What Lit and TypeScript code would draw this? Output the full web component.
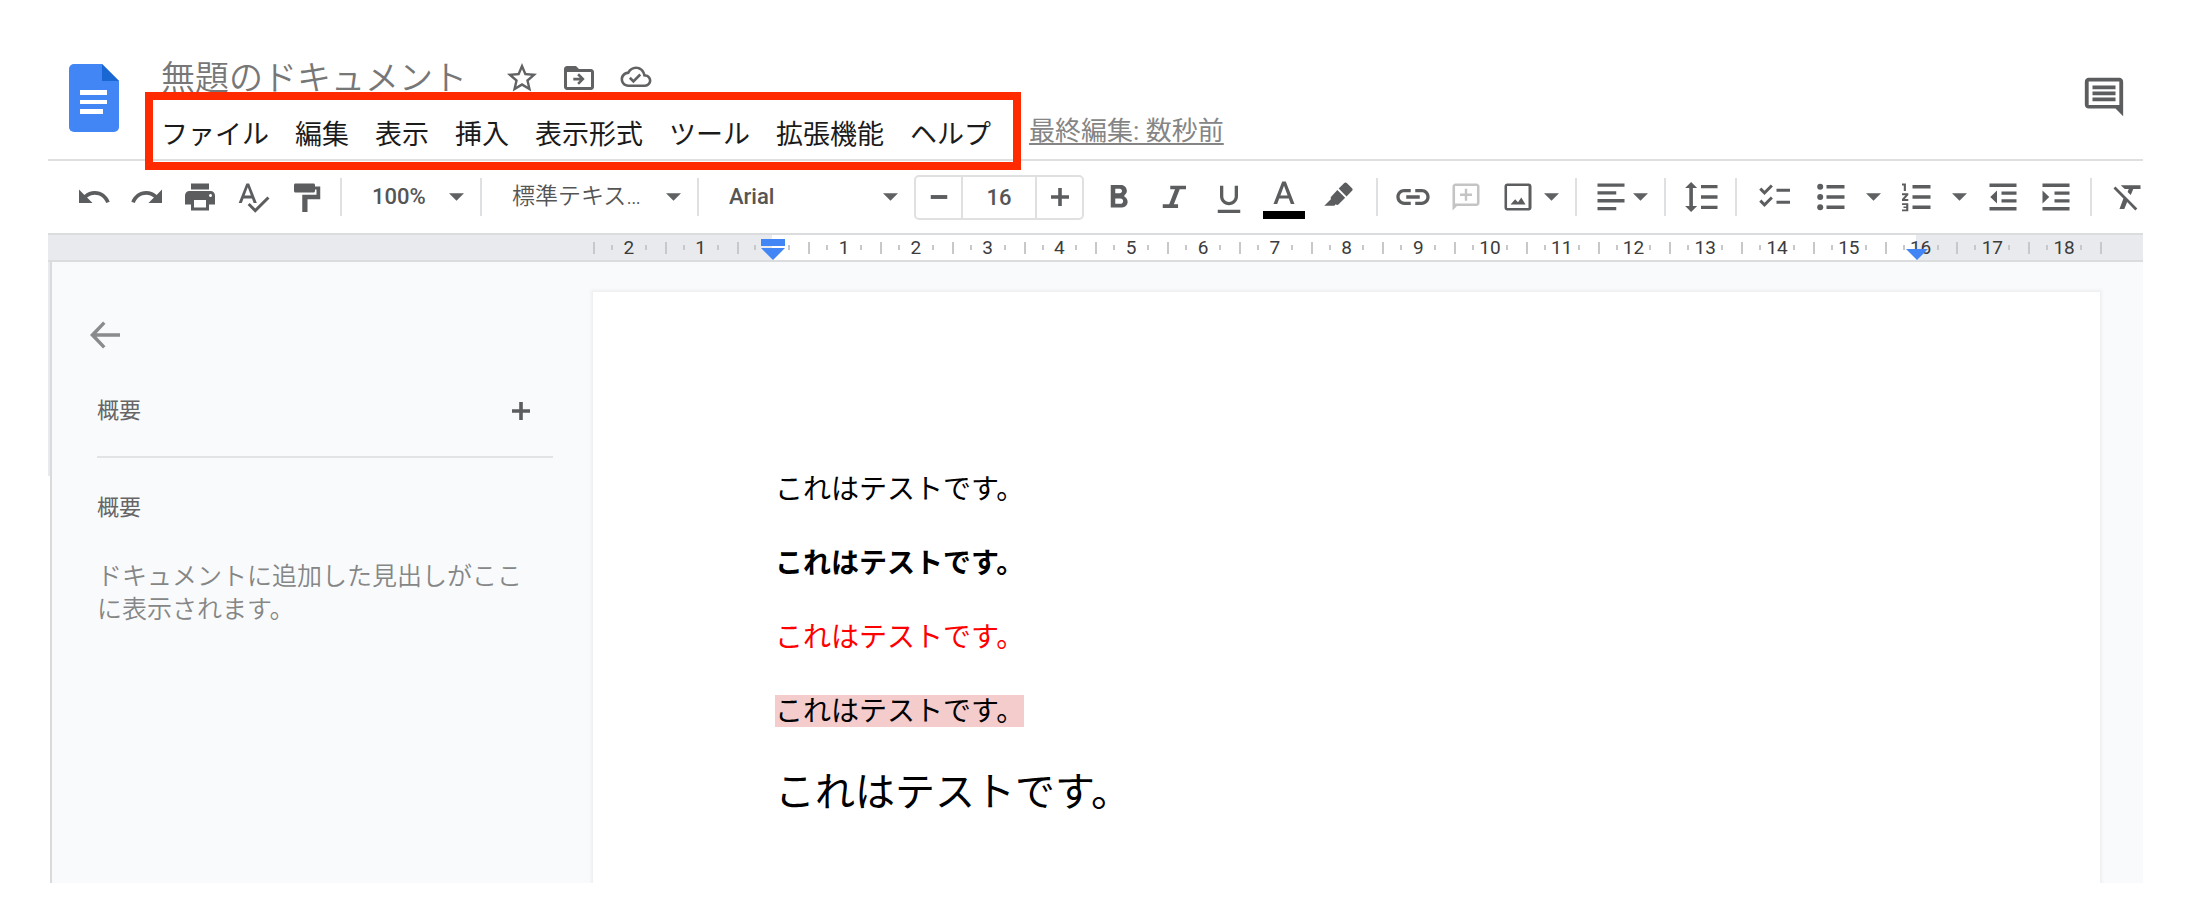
import { LitElement, html, css, svg } from "lit";
import { customElement, property } from "lit/decorators.js";

const star = svg`<path d="M22 9.24l-7.19-.62L12 2 9.19 8.63 2 9.24l5.46 4.73L5.82 21 12 17.27 18.18 21l-1.63-7.03L22 9.24zM12 15.4l-3.76 2.27 1-4.28-3.32-2.88 4.38-.38L12 6.1l1.71 4.04 4.38.38-3.32 2.88 1 4.28L12 15.4z"/>`;
const move = svg`<path d="M20 6h-8l-2-2H4c-1.1 0-2 .9-2 2v12c0 1.1.9 2 2 2h16c1.1 0 2-.9 2-2V8c0-1.100-.9-2-2-2zm0 12H4V8h16v10z"/><path d="M12 16.500l3.800-3.800-3.800-3.800-1.200 1.200 1.700 1.700H8.200v1.800h4.300l-1.700 1.700z"/>`;
const cloud = svg`<path d="M19.350 10.040C18.670 6.590 15.640 4 12 4 9.110 4 6.600 5.640 5.350 8.040 2.340 8.360 0 10.910 0 14c0 3.310 2.690 6 6 6h13c2.760 0 5-2.240 5-5 0-2.640-2.050-4.780-4.650-4.960zM19 18H6c-2.210 0-4-1.790-4-4 0-2.050 1.530-3.760 3.560-3.970l1.070-.110.5-.950C8.080 7.140 9.940 6 12 6c2.620 0 4.880 1.860 5.390 4.430l.3 1.500 1.530.110c1.560.1 2.780 1.410 2.780 2.960 0 1.650-1.350 3-3 3zm-9-3.820l-2.090-2.090L6.500 13.500 10 17l6.010-6.010-1.410-1.410z"/>`;
const comment = svg`<path d="M21.990 4c0-1.100-.890-2-1.990-2H4c-1.100 0-2 .9-2 2v12c0 1.100.9 2 2 2h14l4 4-.010-18zM20 16.200H4V3.900h16v12.300zM6 12.200h12v2H6zM6 9.100h12v2H6zM6 6h12v2H6z"/>`;

const icons: Record<string, unknown> = {
  undo: svg`<path d="M12.500 8c-2.650 0-5.050.990-6.900 2.600L2 7v9h9l-3.620-3.620c1.390-1.160 3.160-1.880 5.120-1.880 3.540 0 6.550 2.310 7.600 5.500l2.370-.780C21.080 11.030 17.150 8 12.500 8z"/>`,
  redo: svg`<path d="M18.400 10.600C16.550 8.990 14.150 8 11.500 8c-4.650 0-8.580 3.030-9.960 7.220L3.900 16c1.050-3.190 4.050-5.500 7.600-5.500 1.950 0 3.730.720 5.120 1.880L13 16h9V7l-3.600 3.600z"/>`,
  print: svg`<path d="M19 8H5c-1.660 0-3 1.340-3 3v6h4v4h12v-4h4v-6c0-1.660-1.340-3-3-3zm-3 11H8v-5h8v5zm3-7c-.55 0-1-.450-1-1s.450-1 1-1 1 .450 1 1-.450 1-1 1zm-1-9H6v4h12V3z"/>`,
  spell: svg`<path d="M12.450 16h2.090L9.430 3H7.570L2.460 16h2.090l1.120-3h5.640l1.140 3zm-6.020-5L8.500 5.480 10.570 11H6.430zm15.160.590l-8.090 8.090L9.830 16l-1.410 1.410 5.090 5.090L23 13l-1.410-1.410z"/>`,
  paint: svg`<path d="M18 5V4c0-.550-.450-1-1-1H5c-.550 0-1 .450-1 1v4c0 .550.450 1 1 1h12c.550 0 1-.450 1-1V7h1v3.500H9.500V22H13v-8.500h8.500V5H18z"/>`,
  bold: svg`<path d="M15.600 10.790c.970-.670 1.650-1.770 1.650-2.790 0-2.260-1.750-4-4-4H6.500v15h7.540c2.090 0 3.710-1.700 3.710-3.790 0-1.520-.860-2.820-2.150-3.420zM9.500 6.500h3c.830 0 1.500.670 1.500 1.500s-.670 1.500-1.500 1.500h-3v-3zm3.500 10H9.500v-3.500H13c.960 0 1.750.790 1.750 1.750S13.960 16.500 13 16.500z"/>`,
  italic: svg`<path d="M9.500 4.500v2.400h3.200l-3.900 10H4.500v2.400h10.200v-2.400h-2.800l3.900-10h4.200V4.500z"/>`,
  underline: svg`<path d="M12 17.500c3.310 0 6-2.690 6-6V4.500h-2.200v7c0 2.100-1.700 3.800-3.800 3.800s-3.800-1.700-3.800-3.800v-7H6v7c0 3.310 2.690 6 6 6zM4.500 20.500v2.200h15v-2.200z"/>`,
  marker: svg`<path d="M15.500 2.700c.5-.5 1.200-.5 1.700 0l3.500 3.500c.5.500.5 1.200 0 1.700L17 11.600 11.800 6.400zM10.900 7.300l5.200 5.200-4.300 4.300c-.6.600-1.400.6-2 0l-.9 1H2.200l4.500-4.500c-.4-.6-.3-1.200.2-1.700z"/>`,
  link: svg`<path d="M3.100 12c0-1.710 1.390-3.100 3.100-3.100h4.300V6.700H6.200C3.270 6.700.9 9.070.9 12s2.370 5.300 5.300 5.300h4.300v-2.200H6.200c-1.710 0-3.100-1.390-3.100-3.100zM7.500 13.100h9v-2.200h-9v2.200zm10.300-6.400h-4.300v2.200h4.300c1.710 0 3.100 1.390 3.100 3.100s-1.390 3.100-3.100 3.100h-4.300v2.200h4.300c2.930 0 5.300-2.370 5.300-5.300s-2.370-5.300-5.300-5.300z"/>`,
  addComment: svg`<path fill-rule="evenodd" d="M3 5c0-1.100.9-2 2-2h14c1.100 0 2 .9 2 2v11c0 1.100-.9 2-2 2H6l-3 3zM4.700 16.400H19.300V4.700H4.700zM11.200 6.500h1.600v3.200H16v1.600h-3.200v3.200h-1.600v-3.200H8V9.700h3.200z"/>`,
  image: svg`<path d="M19 4.700v14.600H4.700V4.700H19M19.200 3H4.800C3.800 3 3 3.800 3 4.800v14.400c0 1 .8 1.800 1.800 1.800h14.400c1 0 1.800-.8 1.800-1.800V4.800c0-1-.8-1.800-1.800-1.800zM14.200 12.300l-2.200 3.200-1.900-2L7 17h10z"/>`,
  align: svg`<path d="M3 3h18v2.200H3zM3 8.200h12.500v2.200H3zM3 13.400h18v2.200H3zM3 18.600h12.500v2.200H3z"/>`,
  spacing: svg`<path d="M4.200 6v12H1.400l4 4 4-4H6.600V6h2.800l-4-4-4 4zM12 4h11v2.200H12zM12 10.900h11v2.200H12zM12 17.800h11V20H12z"/>`,
  checklist: svg`<path d="M13 6.500h9v2h-9zM13 14.500h9v2h-9zM5 10.600L1.500 7.100 2.900 5.700 5 7.800l4.200-4.200 1.400 1.400zM5 18.600l-3.500-3.500 1.400-1.400L5 15.800l4.200-4.200 1.400 1.400z"/>`,
  bullets: svg`<circle cx="4.800" cy="5.200" r="2"/><circle cx="4.800" cy="12" r="2"/><circle cx="4.800" cy="18.800" r="2"/><path d="M9 4h12v2.300H9zM9 10.900h12v2.300H9zM9 17.700h12V20H9z"/>`,
  numbers: svg`<path d="M2 3h2.600v5H3.200V4.300H2zM2 9.500h4.200v1.200L3.900 13.300h2.300v1.300H2v-1.200l2.300-2.600H2zM2 16.200h4.200v5.300H2v-1.200h2.800v-.9H3v-1.100h1.800v-.9H2z"/><path d="M9 4h12v2.300H9zM9 10.900h12v2.300H9zM9 17.700h12V20H9z"/>`,
  outdent: svg`<path d="M3 3h18v2.300H3zM11 8.300h10v2.200H11zM11 13.500h10v2.200H11zM3 18.700h18V21H3zM3.500 12l4.500-4.300v8.600z"/>`,
  indent: svg`<path d="M3 3h18v2.300H3zM11 8.300h10v2.200H11zM11 13.500h10v2.200H11zM3 18.700h18V21H3zM7.500 12L3 7.700v8.600z"/>`,
  clear: svg`<path d="M4.300 5L3 6.300l6.600 6.700L7 20h3.200l1.900-4.600 5.400 5.600 1.400-1.400zM8 4.200v.2L10.500 6.700h2.700l-.8 2 2.100 2 1.700-4H21V4.200z"/>`,
  minus: svg`<path d="M6.500 10.700h11v2.600h-11z"/>`,
  plus: svg`<path d="M18 13.200h-4.800v4.800h-2.400v-4.800H6v-2.400h4.800V6h2.400v4.800H18z"/>`,
  back: svg`<path d="M22 10.900H6.400l5.900-6.400L10.700 3 2 12l8.700 9 1.600-1.500-5.900-6.400H22z"/>`,
};

const icon = (name: string) =>
  html`<svg class="icon" viewBox="0 0 24 24" aria-hidden="true">${icons[name]}</svg>`;
const caret = html`<svg class="caret" viewBox="0 0 10 5" aria-hidden="true"><path d="M0 0h10L5 5z"/></svg>`;

const shared = css`
  * { box-sizing: border-box; }
  button {
    border: 0; padding: 0; background: none; color: inherit; font: inherit;
    display: flex; align-items: center; justify-content: center; cursor: pointer; flex: none;
  }
  .icon { width: 36px; height: 36px; fill: currentColor; display: block; flex: none; }
  .caret { width: 15px; height: 8px; fill: #5f6163; display: block; flex: none; }
`;

@customElement("docs-header")
class DocsHeader extends LitElement {
  static styles = [shared, css`
    :host {
      display: flex; align-items: flex-start; padding: 54px 16px 0 21px; height: 161px;
      border-bottom: 2px solid #dedfe0;
    }
    .logo { width: 50px; height: 68px; margin: 10px 42px 0 0; flex: none; }
    .main { flex: 1; min-width: 0; }
    .top { display: flex; align-items: center; height: 48px; }
    h1 { margin: 0 26px 0 0; font-size: 34px; line-height: 48px; font-weight: 350; color: #777; white-space: nowrap; }
    .top button { width: 57px; height: 48px; color: #606264; }
    .row { display: flex; align-items: center; height: 66px; white-space: nowrap; }
    nav { position: relative; display: flex; gap: 26px; font-size: 27px; line-height: 40px; color: #1b1b1b; }
    nav::after {
      content: ""; position: absolute; inset: -23px -30px -15px -16px;
      border: 8px solid #ff2a00; pointer-events: none;
    }
    .edited { margin: 0 0 8px 38px; font-size: 26px; line-height: 40px; color: #858585; text-decoration: underline; text-underline-offset: 3px; }
    .history { color: #5b5d5f; margin-top: 20px; }
    .history .icon { width: 46px; height: 46px; }
  `];
  render() {
    const menus = ["ファイル", "編集", "表示", "挿入", "表示形式", "ツール", "拡張機能", "ヘルプ"];
    return html`
      <svg class="logo" viewBox="0 0 50 68" aria-hidden="true">
        <path fill="#4285f4" d="M5 0h28l17 17v46a5 5 0 0 1-5 5H5a5 5 0 0 1-5-5V5a5 5 0 0 1 5-5z"/>
        <path fill="#1967d2" d="M33 0l17 17H33z"/>
        <path fill="#fff" d="M11 26h27v5H11zM11 36h27v4H11zM11 45h23v5H11z"/>
      </svg>
      <div class="main">
        <div class="top">
          <h1>無題のドキュメント</h1>
          <button aria-label="スター"><svg class="icon" viewBox="0 0 24 24">${star}</svg></button>
          <button aria-label="移動"><svg class="icon" viewBox="0 0 24 24">${move}</svg></button>
          <button aria-label="ドキュメントのステータス"><svg class="icon" viewBox="-2 -1 28 28">${cloud}</svg></button>
        </div>
        <div class="row">
          <nav>${menus.map((m) => html`<button>${m}</button>`)}</nav>
          <a class="edited" href="#history">最終編集: 数秒前</a>
        </div>
      </div>
      <button class="history" aria-label="コメント履歴"><svg class="icon" viewBox="0 0 24 24">${comment}</svg></button>
    `;
  }
}

@customElement("docs-toolbar")
class DocsToolbar extends LitElement {
  static styles = [shared, css`
    :host { display: flex; align-items: center; height: 72px; padding-left: 19px; overflow: hidden; color: #5b5d5f; }
    .tool { width: 53px; height: 48px; }
    .tool:disabled { color: #c4c4c4; cursor: default; }
    .group { display: flex; align-items: center; flex: none; }
    .history { margin-right: 8px; }
    .style { margin: 0 3px 0 8px; gap: 2px; }
    .checks { margin-left: 3px; gap: 3px; }
    .drop { width: 33px; height: 48px; }
    .combo { height: 48px; padding: 0 8px; gap: 8px; }
    .combo.near { gap: 4px; }
    .sep { width: 2px; height: 38px; background: #dfe0e1; margin: 0 8px; flex: none; }
    .sep.flush { margin: 0; }
    .pick { display: grid; align-items: center; flex: none; width: 138px; }
    .pick > * { grid-area: 1 / 1; }
    .pick .caret { justify-self: end; margin-right: 16px; pointer-events: none; }
    .pick.wide { width: 215px; }
    select {
      appearance: none; border: 0; background: none; width: 100%; height: 44px; padding: 0 0 0 30px;
      font: 500 22px/44px Roboto, "Noto Sans CJK JP", sans-serif; color: #555;
    }
    .ja { font-weight: 350; font-size: 23px; }
    .size { display: flex; height: 45px; border: 2px solid #dfe0e1; border-radius: 5px; flex: none; }
    .size button { width: 45px; }
    .size input {
      width: 76px; border: solid #dfe0e1; border-width: 0 2px; padding: 0; background: none; text-align: center;
      font: 500 22px Roboto, sans-serif; color: #555;
    }
    .color { flex-direction: column; gap: 4px; height: 46px; padding-top: 4px; }
    .color .icon { width: 36px; height: 28px; }
    .swatch { width: 42px; height: 8px; background: #000; }
  `];
  tool(name: string, label: string, disabled = false) {
    return html`<button class="tool" aria-label=${label} ?disabled=${disabled}>${icon(name)}</button>`;
  }
  pick(label: string, value: string, kind = "") {
    return html`<label class="pick ${kind}"><select class=${kind.includes("text") ? "ja" : ""} aria-label=${label}><option>${value}</option></select>${caret}</label>`;
  }
  render() {
    const sep = html`<span class="sep"></span>`;
    const flush = html`<span class="sep flush"></span>`;
    const drop = (label: string) => html`<button class="drop" aria-label=${label}>${caret}</button>`;
    return html`
      <div class="group history">
        ${this.tool("undo", "元に戻す")}${this.tool("redo", "やり直し")}${this.tool("print", "印刷")}
        ${this.tool("spell", "スペルチェック")}${this.tool("paint", "書式の貼り付け")}
      </div>
      <div class="group">
        ${flush}${this.pick("ズーム", "100%")}${flush}${this.pick("スタイル", "標準テキス…", "wide text")}${flush}${this.pick("フォント", "Arial", "wide")}
      </div>
      <div class="size">
        <button aria-label="フォントサイズを縮小">${icon("minus")}</button>
        <input aria-label="フォントサイズ" value="16" />
        <button aria-label="フォントサイズを拡大">${icon("plus")}</button>
      </div>
      <div class="group style">
        ${this.tool("bold", "太字")}${this.tool("italic", "斜体")}${this.tool("underline", "下線")}
        <button class="tool color" aria-label="テキストの色">
          <svg class="icon" viewBox="0 0 36 28" aria-hidden="true"><path d="M16.200 2.500h3.600L28.500 25h-3.700l-2-5.400h-9.600l-2 5.400H7.500zM14.400 16.400h7.200L18 6.700z"/></svg>
          <span class="swatch"></span>
        </button>
        ${this.tool("marker", "ハイライトの色")}
      </div>
      ${sep}
      ${this.tool("link", "リンクを挿入")}${this.tool("addComment", "コメントを追加", true)}
      <button class="combo" aria-label="画像を挿入">${icon("image")}${caret}</button>
      ${sep}
      <button class="combo near" aria-label="配置">${icon("align")}${caret}</button>
      ${sep}
      ${this.tool("spacing", "行間隔")}
      ${sep}
      <div class="group checks">
        ${this.tool("checklist", "チェックリスト")}
        <div class="group">
          ${this.tool("bullets", "箇条書き")}${drop("箇条書きメニュー")}
          ${this.tool("numbers", "番号付きリスト")}${drop("番号付きリストメニュー")}
          ${this.tool("outdent", "インデント減")}${this.tool("indent", "インデント増")}
        </div>
      </div>
      ${sep}
      ${this.tool("clear", "書式をクリア")}
    `;
  }
}

@customElement("docs-ruler")
class DocsRuler extends LitElement {
  @property({ type: Number }) first = -2;
  @property({ type: Number }) last = 18;
  static styles = [shared, css`
    :host {
      display: block; padding: 0 43px 0 545px; background: #e8eaed;
      border-top: 2px solid #dadcde; border-bottom: 2px solid #dadcde;
      font: 400 19px/24px Roboto, sans-serif; color: #3c3c3c;
    }
    .scale { position: relative; display: grid; grid-auto-flow: column; grid-auto-columns: minmax(0, 1fr); height: 25px; }
    .text { position: absolute; inset-block: 0; background: #fff; }
    .cm { position: relative; display: grid; grid-template-columns: 1fr 2fr 1fr; align-items: center; }
    .cm::before { content: ""; position: absolute; left: 0; width: 2px; height: 12px; background: #c6c8ca; }
    .cm:last-of-type::after { content: ""; position: absolute; right: -2px; width: 2px; height: 12px; background: #c6c8ca; }
    .label { grid-column: 2; text-align: center; border: solid #c6c8ca; border-width: 0 2px; height: 5px; line-height: 5px; }
    .mark { position: absolute; top: 4px; width: 24px; height: 21px; margin-left: -11px; fill: #4285f4; }
  `];
  render() {
    const count = this.last - this.first + 1;
    const at = (cm: number) => ((cm - this.first + 0.5) / count) * 100;
    const cms = Array.from({ length: count }, (_, i) => this.first + i);
    return html`
      <div class="scale">
        <span class="text" style="left:${at(0)}%;right:${100 - at(15.93)}%"></span>
        ${cms.map((n) => html`<div class="cm"><span class="label">${n === 0 ? "" : Math.abs(n)}</span></div>`)}
        <svg class="mark" style="left:${at(0)}%" viewBox="0 0 24 21" aria-hidden="true"><path d="M0 0h24v7H0zM0 9h24L12 21z"/></svg>
        <svg class="mark" style="left:${at(15.93)}%" viewBox="0 0 24 21" aria-hidden="true"><path d="M1 10h22L12 21z"/></svg>
      </div>
    `;
  }
}

@customElement("docs-outline")
class DocsOutline extends LitElement {
  static styles = [shared, css`
    :host { display: block; width: 543px; flex: none; padding: 55px 40px 0 45px; border-left: 2px solid #d8dadc; color: #666; }
    .back { width: 36px; height: 36px; margin-left: -10px; color: #8a8b8c; }
    .summary { display: flex; justify-content: space-between; align-items: center; margin-top: 40px; padding: 0 14px 27px 0; border-bottom: 2px solid #e2e3e5; }
    h2 { margin: 0; font-size: 22px; line-height: 36px; font-weight: 400; }
    .summary button { color: #5b5d5f; }
    .outline { margin-top: 32px; }
    p { margin: 34px 24px 0 0; font-size: 25px; line-height: 33px; font-weight: 350; color: #858686; }
  `];
  render() {
    return html`
      <button class="back" aria-label="閉じる">${icon("back")}</button>
      <section class="summary"><h2>概要</h2><button aria-label="概要を追加">${icon("plus")}</button></section>
      <section class="outline"><h2>概要</h2><p>ドキュメントに追加した見出しがここに表示されます。</p></section>
    `;
  }
}

@customElement("app-root")
class AppRoot extends LitElement {
  static styles = [shared, css`
    :host {
      display: flex; flex-direction: column; box-sizing: border-box; min-height: 100vh; padding: 0 53px 41px 48px;
      background: #fff; font-family: Roboto, "Noto Sans CJK JP", sans-serif;
    }
    .work {
      flex: 1; display: flex; padding-left: 2px;
      background:
        linear-gradient(#e8eaed, #e8eaed) 0 0 / 2px 214px no-repeat,
        linear-gradient(#fff, #fff) 0 0 / 2px 100% no-repeat,
        #f9fafc;
    }
    .page {
      flex: 1; min-width: 0; margin: 30px 43px 0 0; padding: 177px 182px 0; background: #fff; color: #000;
      box-shadow: 0 0 3px 2px #eeeff0; clip-path: inset(-5px -5px 0 -5px);
      font: 28px/37px "Noto Sans CJK JP", sans-serif;
    }
    p { margin: 0 0 37px; }
    .bold { font-weight: 700; }
    .red { color: #f00; }
    mark { display: inline-block; padding-bottom: 3px; line-height: 29px; background: #f4cccc; color: inherit; }
    .large { font-size: 40px; line-height: 48px; }
  `];
  render() {
    const line = "これはテストです。";
    return html`
      <docs-header></docs-header>
      <docs-toolbar></docs-toolbar>
      <docs-ruler></docs-ruler>
      <div class="work">
        <docs-outline></docs-outline>
        <main class="page">
          <p>${line}</p>
          <p class="bold">${line}</p>
          <p class="red">${line}</p>
          <p><mark>${line}</mark></p>
          <p class="large">${line}</p>
        </main>
      </div>
    `;
  }
}
